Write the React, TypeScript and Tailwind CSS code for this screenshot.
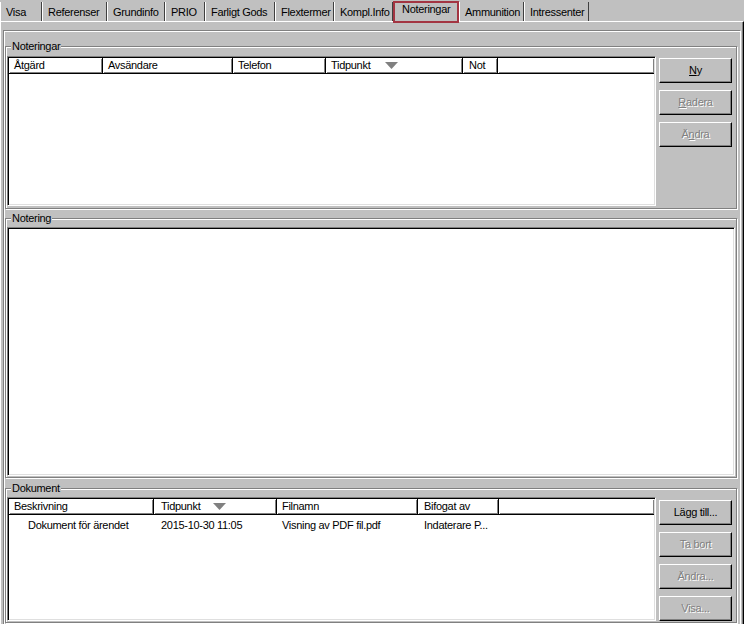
import type { ReactNode } from "react";

const TABS = [
  { label: "Visa", w: 42 },
  { label: "Referenser", w: 65 },
  { label: "Grundinfo", w: 58 },
  { label: "PRIO", w: 40 },
  { label: "Farligt Gods", w: 70 },
  { label: "Flextermer", w: 59 },
  { label: "Kompl.Info", w: 59 },
  { label: "Noteringar", w: 66, active: true },
  { label: "Ammunition", w: 65 },
  { label: "Intressenter", w: 65 },
];

type Col = { label: string; w?: number; pl: number; sort?: boolean; sortGap?: number };

const NOTE_COLS: Col[] = [
  { label: "Åtgärd", w: 94, pl: 5 },
  { label: "Avsändare", w: 130, pl: 5 },
  { label: "Telefon", w: 93, pl: 5 },
  { label: "Tidpunkt", w: 137, pl: 5, sort: true, sortGap: 15 },
  { label: "Not", w: 35, pl: 6 },
  { label: "", pl: 0 },
];

const DOC_COLS: Col[] = [
  { label: "Beskrivning", w: 145, pl: 5 },
  { label: "Tidpunkt", w: 123, pl: 7, sort: true, sortGap: 13 },
  { label: "Filnamn", w: 141, pl: 5 },
  { label: "Bifogat av", w: 81, pl: 6 },
  { label: "", pl: 0 },
];

const DOC_ROW = [
  { text: "Dokument för ärendet", pl: 19 },
  { text: "2015-10-30 11:05", pl: 7 },
  { text: "Visning av PDF fil.pdf", pl: 5 },
  { text: "Indaterare P...", pl: 6 },
];

function SortArrow({ gap }: { gap: number }) {
  return (
    <svg width="13" height="7" viewBox="0 0 13 7" style={{ marginLeft: gap }}>
      <polygon points="0,0 13,0 6.5,7" fill="#808080" />
    </svg>
  );
}

function Header({ cols }: { cols: Col[] }) {
  return (
    <div className="flex h-[16px] shrink-0">
      {cols.map((c, i) => (
        <div
          key={i}
          className={
            "flex h-[16px] items-center border-b border-black leading-[15px] shadow-[inset_1px_1px_0_#fff,inset_-1px_-1px_0_#808080] " +
            (c.w ? "shrink-0 border-r" : "flex-1")
          }
          style={{ width: c.w, paddingLeft: c.pl }}
        >
          {c.label}
          {c.sort && <SortArrow gap={c.sortGap ?? 14} />}
        </div>
      ))}
    </div>
  );
}

function Sunken({ className, children }: { className?: string; children?: ReactNode }) {
  return (
    <div
      className={
        "flex flex-col border border-[#808080] border-b-white border-r-white bg-white p-[1px] shadow-[inset_1px_1px_0_#000,inset_-1px_-1px_0_#dfdfdf] " +
        (className ?? "")
      }
    >
      {children}
    </div>
  );
}

function Btn({ children, disabled }: { children: ReactNode; disabled?: boolean }) {
  return (
    <div
      className={
        "flex h-[25px] w-[73px] shrink-0 items-center justify-center border border-white border-b-black border-r-black shadow-[inset_-1px_-1px_0_#808080] " +
        (disabled ? "text-[#808080] [text-shadow:1px_1px_0_#fff]" : "text-black")
      }
    >
      {children}
    </div>
  );
}

function Group({ label, className, children }: { label: string; className?: string; children?: ReactNode }) {
  return (
    <div
      className={
        "relative border border-[#808080] shadow-[inset_1px_1px_0_#fff,1px_1px_0_#fff] " + (className ?? "")
      }
    >
      <span className="absolute left-[5px] top-[-7px] bg-[#c0c0c0] px-[1px] leading-[13px]">{label}</span>
      {children}
    </div>
  );
}

export default function App() {
  return (
    <div className="flex h-[624px] w-[744px] flex-col overflow-hidden bg-[#c0c0c0] font-['Liberation_Sans',Arial,sans-serif] text-[11px] tracking-[-0.3px] text-black">
      {/* TABS */}
      <div className="relative z-10 flex h-[21px] shrink-0 items-end">
        {TABS.map((t) =>
          t.active ? (
            <div
              key={t.label}
              className="mb-[-2px] h-[22px] shrink-0 self-start border-2 border-[#a33542] bg-[#c0c0c0] pl-[7px] pt-0 leading-[13px]"
              style={{ width: t.w, marginTop: 1 }}
            >
              {t.label}
            </div>
          ) : (
            <div
              key={t.label}
              className="h-[19px] shrink-0 border-l border-r border-l-white border-r-[#404040] pl-[5px] pt-[4px] leading-[13px]"
              style={{ width: t.w }}
            >
              {t.label}
            </div>
          )
        )}
      </div>

      {/* TAB PANE */}
      <div className="flex flex-1 flex-col border-l border-r border-t border-l-white border-r-black border-t-white pl-[2px] pr-[2px] pt-[8px] shadow-[inset_-1px_0_0_#808080]">
        <div className="flex flex-1 flex-col border border-b-0 border-[#808080] border-r-white pb-[1px] pl-[1px] pr-[3px] pt-[15px] shadow-[inset_1px_1px_0_#fff]">

          {/* NOTERINGAR */}
          <Group label="Noteringar" className="flex h-[163px] shrink-0 gap-[3px] pb-[2px] pl-[1px] pr-[4px] pt-[9px]">
            <Sunken className="flex-1">
              <Header cols={NOTE_COLS} />
            </Sunken>
            <div className="mt-[2px] flex flex-col gap-[7px]">
              <Btn>
                <span className="underline underline-offset-[1px]">N</span>y
              </Btn>
              <Btn disabled>
                <span className="underline underline-offset-[1px]">R</span>adera
              </Btn>
              <Btn disabled>
                Ä<span className="underline underline-offset-[1px]">n</span>dra
              </Btn>
            </div>
          </Group>

          {/* NOTERING */}
          <Group label="Notering" className="mt-[9px] flex h-[260px] shrink-0 flex-col pb-[1px] pl-[1px] pr-[1px] pt-[8px]">
            <Sunken className="h-[249px]" />
          </Group>

          {/* DOKUMENT */}
          <Group label="Dokument" className="mt-[10px] flex flex-1 gap-[3px] pb-[1px] pl-[1px] pr-[4px] pt-[8px]">
            <Sunken className="flex-1">
              <Header cols={DOC_COLS} />
              <div className="flex pt-[2px] leading-[16px]">
                {DOC_ROW.map((c, i) => (
                  <div
                    key={i}
                    className="shrink-0 whitespace-nowrap"
                    style={{ width: DOC_COLS[i].w, paddingLeft: c.pl }}
                  >
                    {c.text}
                  </div>
                ))}
              </div>
            </Sunken>
            <div className="mt-[3px] flex flex-col gap-[7px]">
              <Btn>Lägg till...</Btn>
              <Btn disabled>Ta bort</Btn>
              <Btn disabled>Ändra...</Btn>
              <Btn disabled>Visa...</Btn>
            </div>
          </Group>
        </div>
      </div>
    </div>
  );
}
